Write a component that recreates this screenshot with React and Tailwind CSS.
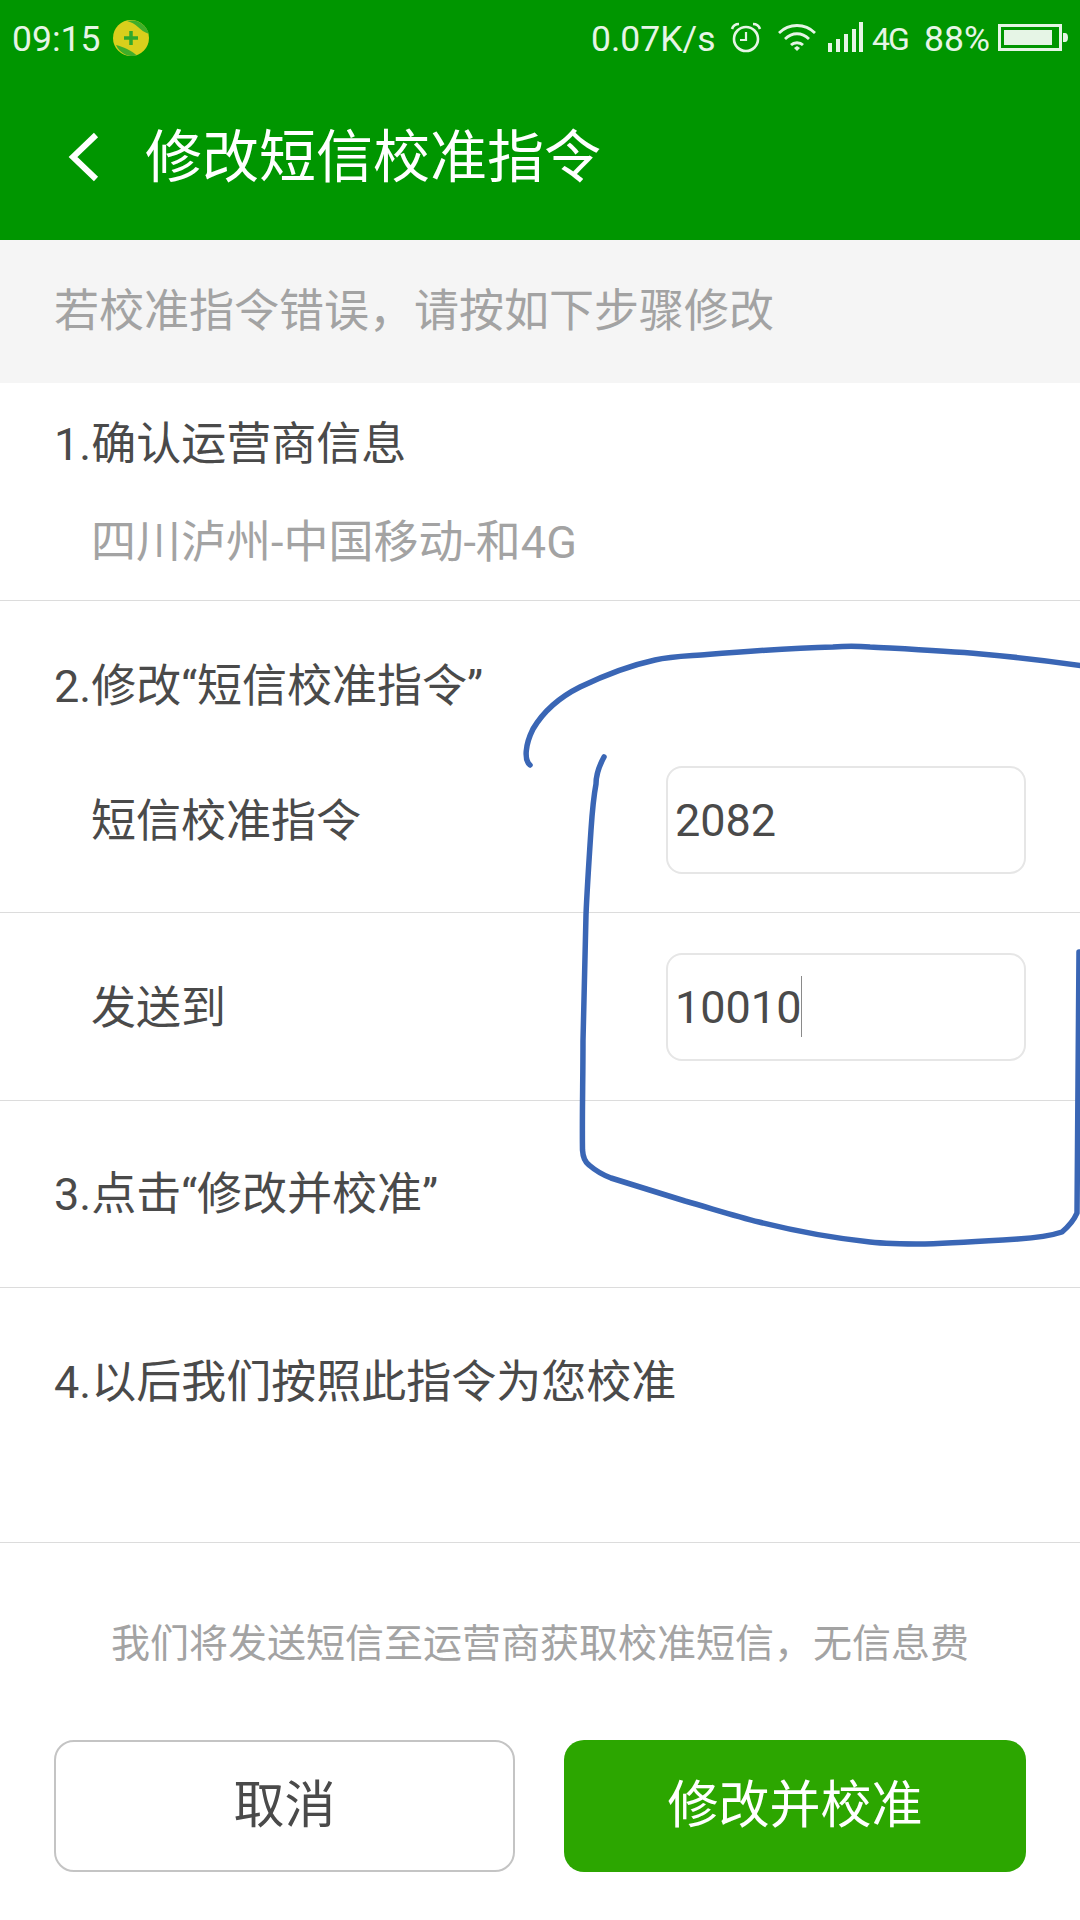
import React from 'react';

const AlarmIcon = () => (
  <svg width="32" height="31" viewBox="0 0 32 31" fill="none" stroke="#e6f5e6" strokeWidth="2.6">
    <circle cx="16" cy="17" r="12" />
    <path d="M16 10v8h-6" strokeWidth="2.2" />
    <path d="M2 7c1-3 4-5 7-5M30 7c-1-3-4-5-7-5" strokeWidth="2.6" />
  </svg>
);

const WifiIcon = () => (
  <svg width="40" height="29" viewBox="0 0 40 29" fill="none" stroke="#e6f5e6" strokeWidth="2.8">
    <path d="M2 10C12 0 28 0 38 10" />
    <path d="M8 16C15 9 25 9 32 16" />
    <path d="M14 22C17 19 23 19 26 22" />
    <path d="M17 25l3-2 3 2-3 3z" fill="#e6f5e6" stroke="none" />
  </svg>
);

const SignalIcon = () => (
  <svg width="35" height="30" viewBox="0 0 35 30" fill="#e6f5e6">
    <rect x="0" y="21" width="4" height="9" />
    <rect x="8" y="17" width="4" height="13" />
    <rect x="16" y="12" width="4" height="18" />
    <rect x="24" y="7" width="4" height="23" />
    <rect x="31" y="0" width="4" height="30" />
  </svg>
);

const BatteryIcon = () => (
  <svg width="70" height="27" viewBox="0 0 70 27" fill="none">
    <rect x="1.5" y="1.5" width="61" height="24" stroke="#e6f5e6" strokeWidth="3" />
    <rect x="6" y="6" width="48" height="15" fill="#e6f5e6" />
    <path d="M65 9h2c2 0 3 2 3 4.500s-1 4.500-3 4.500h-2z" fill="#e6f5e6" />
  </svg>
);

const NotifyIcon = () => (
  <svg width="38" height="36" viewBox="0 0 36 36">
    <circle cx="18" cy="18" r="18" fill="#d9cf1c" />
    <path d="M14 1A18 18 0 0 1 36 14C31 12 28 10 25 7C22 4 18 2 14 1z" fill="#3fae2a" />
    <path d="M3 25A18 18 0 0 0 24 35.500C21 33 18 31 14 29C10 27 7 26 3 25z" fill="#3fae2a" />
    <path d="M18 11v14M11 18h14" stroke="#2fa82c" strokeWidth="3.500" fill="none" />
  </svg>
);

const Divider = () => <div className="h-[1px] bg-[#dcdcdc]" />;

const InputBox = ({ value, caret }) => (
  <div className="w-[360px] h-[108px] mr-[54px] flex items-center pl-[7px] border-2 border-[#e6e6e6] rounded-[16px] text-[#4a4a4a] text-[45px]">
    <span className="pt-[2px]">{value}</span>
    {caret && <span className="w-[1px] h-[61px] bg-[#8a8a8a]" />}
  </div>
);

const InputRow = ({ label, value, caret, className }) => (
  <div className={`flex items-center justify-between pl-[91px] ${className}`}>
    <span className="pt-[3px] text-[45px] leading-none text-[#4a4a4a]">{label}</span>
    <InputBox value={value} caret={caret} />
  </div>
);

export default function App() {
  return (
    <div className="relative w-[1080px] h-[1920px] bg-white overflow-hidden font-[Roboto,'Noto_Sans_CJK_SC',sans-serif]">
      <header className="h-[240px] bg-[#009600] text-white">
        <div className="h-[78px] flex items-start pt-[20px] text-[#e6f5e6] text-[35.5px] leading-[38px]">
          <span className="ml-[12px] w-[100px]">09:15</span>
          <NotifyIcon />
          <span className="ml-auto w-[132px]">0.07K/s</span>
          <span className="mt-[2px] ml-[7px]"><AlarmIcon /></span>
          <span className="mt-[3px] ml-[15px]"><WifiIcon /></span>
          <span className="mt-[2px] ml-[11px]"><SignalIcon /></span>
          <span className="ml-[9px] w-[44px] text-[32px] tracking-[-2px]">4G</span>
          <span className="ml-[8px] w-[74px]">88%</span>
          <span className="mt-[4px] mr-[12px]"><BatteryIcon /></span>
        </div>
        <div className="h-[162px] flex items-center pb-[4px]">
          <svg className="ml-[67px]" width="32" height="50" viewBox="0 0 32 50" fill="none" stroke="white" strokeWidth="6">
            <path d="M29 3L6 25l23 22" />
          </svg>
          <h1 className="ml-[46px] text-[57px] leading-none font-normal">修改短信校准指令</h1>
        </div>
      </header>

      <div className="h-[143px] flex items-center pl-[54px] bg-[#f5f5f5] text-[45px] leading-none text-[#a3a3a3]">
        若校准指令错误，请按如下步骤修改
      </div>

      <section className="h-[217px] pl-[54px] pt-[37px] text-[45px] leading-none">
        <p className="h-[48px] flex items-center text-[#4a4a4a]">1.确认运营商信息</p>
        <p className="mt-[50px] ml-[37px] h-[48px] flex items-center text-[#a3a3a3]">四川泸州-中国移动-和4G</p>
      </section>
      <Divider />

      <section className="h-[311px]">
        <p className="pl-[54px] pt-[62px] text-[45px] leading-[48px] text-[#4a4a4a]">2.修改“短信校准指令”</p>
        <InputRow label="短信校准指令" value="2082" className="mt-[55px]" />
      </section>
      <Divider />

      <InputRow label="发送到" value="10010" caret className="h-[187px]" />
      <Divider />

      <div className="h-[186px] flex items-center pl-[54px] text-[45px] leading-none text-[#4a4a4a]">3.点击“修改并校准”</div>
      <Divider />

      <div className="h-[254px] pl-[54px] pt-[71px] text-[45px] leading-[48px] text-[#4a4a4a]">4.以后我们按照此指令为您校准</div>
      <Divider />

      <p className="mt-[80px] text-center text-[39px] leading-[42px] text-[#a3a3a3]">我们将发送短信至运营商获取校准短信，无信息费</p>

      <div className="mt-[75px] flex gap-[49px] px-[54px]">
        <button className="w-[461px] h-[132px] bg-white border-2 border-[#c4c4c4] rounded-[20px] text-[51px] text-[#4a4a4a]">取消</button>
        <button className="w-[462px] h-[132px] bg-[#2ca600] rounded-[20px] text-[51px] text-white">修改并校准</button>
      </div>

      {/* hand drawn annotation */}
      <svg className="absolute top-0 left-0 pointer-events-none" width="1080" height="1920" fill="none" stroke="#3a66b5" strokeWidth="5.500" strokeLinecap="round" strokeLinejoin="round">
        <path d="M530 765C524 760 525 745 533 729C543 712 560 697 580 687C605 675 632 665 655 660C672 656 690 656 707 654.500C750 651 790 648 833 647C845 646 858 646 870 647C905 649 945 651 981 654C1015 657 1050 661 1084 666" />
        <path d="M604 757C598 768 596 775 596 784C593 800 592 815 591 830C589 860 587 890 586 915C585 958 584 1000 583 1041C583 1080 582 1115 582.500 1150C583 1158 585 1162 589 1165C596 1171 603 1175 611 1178C636 1186 660 1193 685 1201C710 1208 735 1216 759 1222C795 1231 833 1238 870 1242C888 1244 907 1244 925 1244C956 1243 987 1241 1018 1239C1035 1238 1050 1236 1062 1232C1069 1226 1074 1220 1077 1213C1077 1170 1078 1126 1078 1083C1078 1040 1079 996 1079 952" />
      </svg>
    </div>
  );
}
